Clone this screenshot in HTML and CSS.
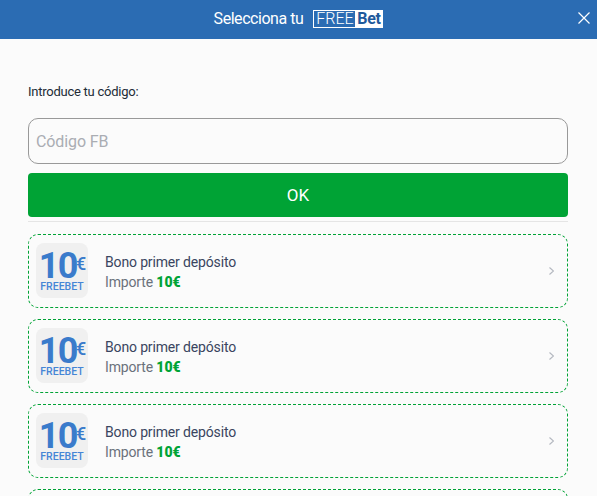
FILE: index.html
```html
<!DOCTYPE html>
<html lang="es">
<head>
  <meta charset="UTF-8">
  <title>Selecciona tu FreeBet</title>
  <link rel="stylesheet" href="styles.css">
</head>
<body>
  <header class="topbar">
    <span class="topbar-title">Selecciona tu</span>
    <span class="fb-logo"><span class="fb-free">FREE</span><span class="fb-bet">Bet</span></span>
    <svg class="close" width="12" height="12" viewBox="0 0 12 12"><path d="M.5.5l11 11M11.500.5l-11 11" stroke="#fff" stroke-width="1.2" fill="none"/></svg>
  </header>

  <main class="content">
    <label class="code-label" for="code">Introduce tu código:</label>
    <input class="code-input" id="code" type="text" placeholder="Código FB">
    <button class="ok-btn">OK</button>
    <div class="divider"></div>

    <div class="bonus">
      <div class="badge">
        <div class="badge-amount">10<span class="badge-euro">€</span></div>
        <div class="badge-text">FREEBET</div>
      </div>
      <div class="bonus-info">
        <div class="bonus-name">Bono primer depósito</div>
        <div class="bonus-value">Importe <b>10€</b></div>
      </div>
      <svg class="chevron" width="5" height="8" viewBox="0 0 5 8"><path d="M.5.5L4.500 4 .5 7.500" stroke="#b4b8c0" stroke-width="1.2" fill="none"/></svg>
    </div>

    <div class="bonus">
      <div class="badge">
        <div class="badge-amount">10<span class="badge-euro">€</span></div>
        <div class="badge-text">FREEBET</div>
      </div>
      <div class="bonus-info">
        <div class="bonus-name">Bono primer depósito</div>
        <div class="bonus-value">Importe <b>10€</b></div>
      </div>
      <svg class="chevron" width="5" height="8" viewBox="0 0 5 8"><path d="M.5.5L4.500 4 .5 7.500" stroke="#b4b8c0" stroke-width="1.2" fill="none"/></svg>
    </div>

    <div class="bonus">
      <div class="badge">
        <div class="badge-amount">10<span class="badge-euro">€</span></div>
        <div class="badge-text">FREEBET</div>
      </div>
      <div class="bonus-info">
        <div class="bonus-name">Bono primer depósito</div>
        <div class="bonus-value">Importe <b>10€</b></div>
      </div>
      <svg class="chevron" width="5" height="8" viewBox="0 0 5 8"><path d="M.5.5L4.500 4 .5 7.500" stroke="#b4b8c0" stroke-width="1.2" fill="none"/></svg>
    </div>

    <div class="bonus"></div>
  </main>
</body>
</html>
```

FILE: styles.css
```css
html, body {
  height: 100%;
}

body {
  margin: 0;
  background: #fbfbfb;
  font-family: Roboto, "Liberation Sans", sans-serif;
  overflow: hidden;
}

.topbar {
  height: 39px;
  box-sizing: border-box;
  padding-bottom: 2px;
  background: #2b6cb3;
  color: #fff;
  display: flex;
  align-items: center;
  justify-content: center;
  gap: 10px;
  position: relative;
}

.topbar-title {
  font-size: 16px;
  letter-spacing: -0.45px;
}

.fb-logo {
  display: flex;
  height: 18px;
  line-height: 16px;
  border: 1px solid #fff;
  box-sizing: border-box;
  font-size: 16px;
  font-weight: 300;
}

.fb-free {
  width: 41px;
  text-align: center;
}

.fb-bet {
  width: 27px;
  text-align: center;
  background: #fff;
  color: #1f5a9c;
  font-weight: 700;
  letter-spacing: -0.3px;
}

.close {
  position: absolute;
  right: 7px;
  top: 12px;
}

.content {
  padding: 45px 29px 0 28px;
  display: flex;
  flex-direction: column;
}

.code-label {
  font-size: 13px;
  line-height: 15px;
  letter-spacing: -0.25px;
  color: #222b36;
}

.code-input {
  margin-top: 19px;
  height: 46px;
  box-sizing: border-box;
  border: 1px solid #999;
  border-radius: 10px;
  background: #fbfbfb;
  padding: 0 7px;
  font: 16px Roboto, sans-serif;
  letter-spacing: -0.1px;
  outline: none;
}

.code-input::placeholder {
  color: #aaadb3;
  opacity: 1;
}

.ok-btn {
  margin-top: 9px;
  height: 44px;
  border: 0;
  border-radius: 4px;
  background: #00a335;
  color: #fff;
  font: 400 17px Roboto, sans-serif;
}

.divider {
  margin: 4px 0 12px;
  height: 1px;
  background: #e5e5e5;
}

.bonus {
  height: 74px;
  flex-shrink: 0;
  box-sizing: border-box;
  border: 1px dashed #00a335;
  border-radius: 10px;
  padding: 0 13px 1px 7px;
  display: flex;
  align-items: center;
}

.bonus + .bonus {
  margin-top: 11px;
}

.badge {
  width: 52px;
  height: 55px;
  border-radius: 8px;
  background: #f0f0f0;
  color: #3a7bcb;
  text-align: center;
  flex-shrink: 0;
}

.badge-amount {
  font-size: 36px;
  font-weight: 700;
  line-height: 28px;
  letter-spacing: -1.5px;
  margin-top: 7px;
  padding-left: 1px;
  white-space: nowrap;
}

.badge-euro {
  font-size: 18px;
  letter-spacing: 0;
  vertical-align: 8px;
  font-weight: 500;
  margin-left: -1px;
}

.badge-text {
  font-size: 10.500px;
  font-weight: 500;
  line-height: 13px;
  color: #4585d6;
}

.bonus-info {
  margin-top: 3px;
  margin-left: 17px;
  flex: 1;
  font-size: 14px;
  line-height: 20px;
  letter-spacing: -0.15px;
}

.bonus-name {
  color: #3a4560;
}

.bonus-value {
  color: #6a717b;
}

.bonus-value b {
  color: #00a335;
  font-weight: 900;
  letter-spacing: 0;
}
```
